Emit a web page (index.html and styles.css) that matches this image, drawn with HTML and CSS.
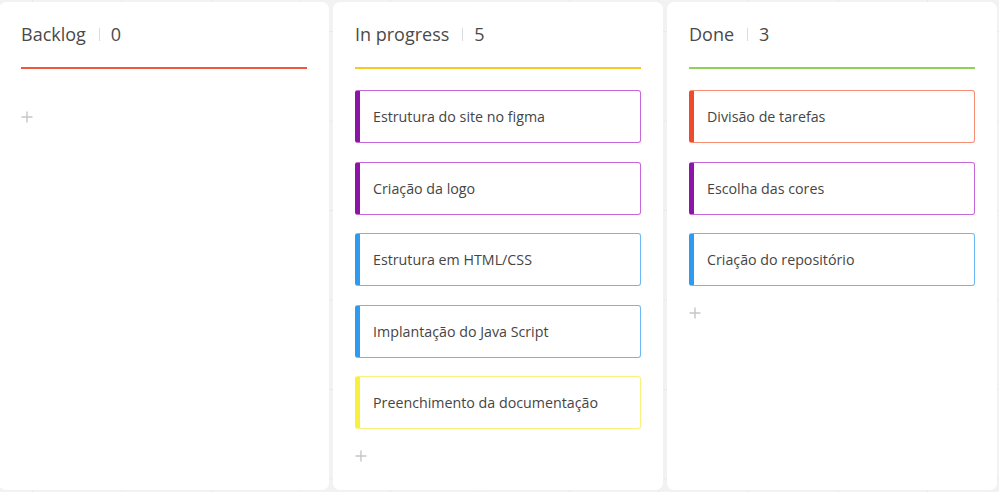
FILE: index.html
```html
<!DOCTYPE html>
<html lang="pt">
<head>
<meta charset="utf-8">
<title>Kanban</title>
<link rel="stylesheet" href="styles.css">
</head>
<body>
<div class="board">
  <section class="column">
    <header class="col-head red">
      <span class="col-title">Backlog</span><span class="sep"></span><span class="col-count">0</span>
    </header>
    <div class="cards"></div>
    <div class="add"><svg width="12" height="12" viewBox="0 0 12 12"><path d="M6 0.5v11M0.5 6h11" stroke="#c6c6c6" stroke-width="1.4" fill="none"/></svg></div>
  </section>
  <section class="column">
    <header class="col-head yellow">
      <span class="col-title">In progress</span><span class="sep"></span><span class="col-count">5</span>
    </header>
    <div class="cards">
      <div class="card purple">Estrutura do site no figma</div>
      <div class="card purple">Criação da logo</div>
      <div class="card blue">Estrutura em HTML/CSS</div>
      <div class="card blue">Implantação do Java Script</div>
      <div class="card lemon">Preenchimento da documentação</div>
    </div>
    <div class="add"><svg width="12" height="12" viewBox="0 0 12 12"><path d="M6 0.5v11M0.5 6h11" stroke="#c6c6c6" stroke-width="1.4" fill="none"/></svg></div>
  </section>
  <section class="column">
    <header class="col-head green">
      <span class="col-title">Done</span><span class="sep"></span><span class="col-count">3</span>
    </header>
    <div class="cards">
      <div class="card orange">Divisão de tarefas</div>
      <div class="card purple">Escolha das cores</div>
      <div class="card blue">Criação do repositório</div>
    </div>
    <div class="add"><svg width="12" height="12" viewBox="0 0 12 12"><path d="M6 0.5v11M0.5 6h11" stroke="#c6c6c6" stroke-width="1.4" fill="none"/></svg></div>
  </section>
</div>
</body>
</html>
```
FILE: styles.css
```css
html, body {
  margin: 0;
  padding: 0;
  height: 100%;
}
body {
  font-family: "Open Sans", "Liberation Sans", sans-serif;
  background-color: #f2f2f2;
  background-image:
    linear-gradient(to right, #e9e9e9 1px, transparent 1px),
    linear-gradient(to bottom, #e9e9e9 1px, transparent 1px);
  background-size: 89.5px 89.5px;
  background-position: 32px 31px;
  overflow: hidden;
}
.board {
  display: flex;
  gap: 4px;
  margin-left: -1px;
  padding-top: 2px;
}
.column {
  width: 330px;
  height: 488px;
  box-sizing: border-box;
  background: #fff;
  border-radius: 7px;
  padding: 0 22px;
}
.col-head {
  padding: 20px 0 21px;
  line-height: 24px;
  font-size: 18px;
  color: #4a4a4a;
  border-bottom: 2px solid #ccc;
  margin-bottom: 21px;
}
.col-head.red { border-color: #f0553d; }
.col-head.yellow { border-color: #f8c925; }
.col-head.green { border-color: #8fd25a; }
.sep {
  display: inline-block;
  width: 1px;
  height: 13px;
  background: #dcdcdc;
  margin: 0 11px 0 13px;
}
.cards {
  display: flex;
  flex-direction: column;
  gap: 18.5px;
}
.card {
  height: 53px;
  box-sizing: border-box;
  display: flex;
  align-items: center;
  padding-left: 13px;
  font-size: 14.25px;
  color: #454545;
  border: 1px solid #ccc;
  border-left-width: 5px;
  border-radius: 3px;
}
.card.purple { border-color: #c867dc; border-left-color: #8c14a6; }
.card.blue { border-color: #6cb8f4; border-left-color: #2f9bef; }
.card.lemon { border-color: #f9f27c; border-left-color: #f7f03c; }
.card.orange { border-color: #f78d72; border-left-color: #f04a2c; }
.add {
  margin-top: 17px;
  height: 20px;
  display: flex;
  align-items: center;
}
.add svg { display: block; }
```
